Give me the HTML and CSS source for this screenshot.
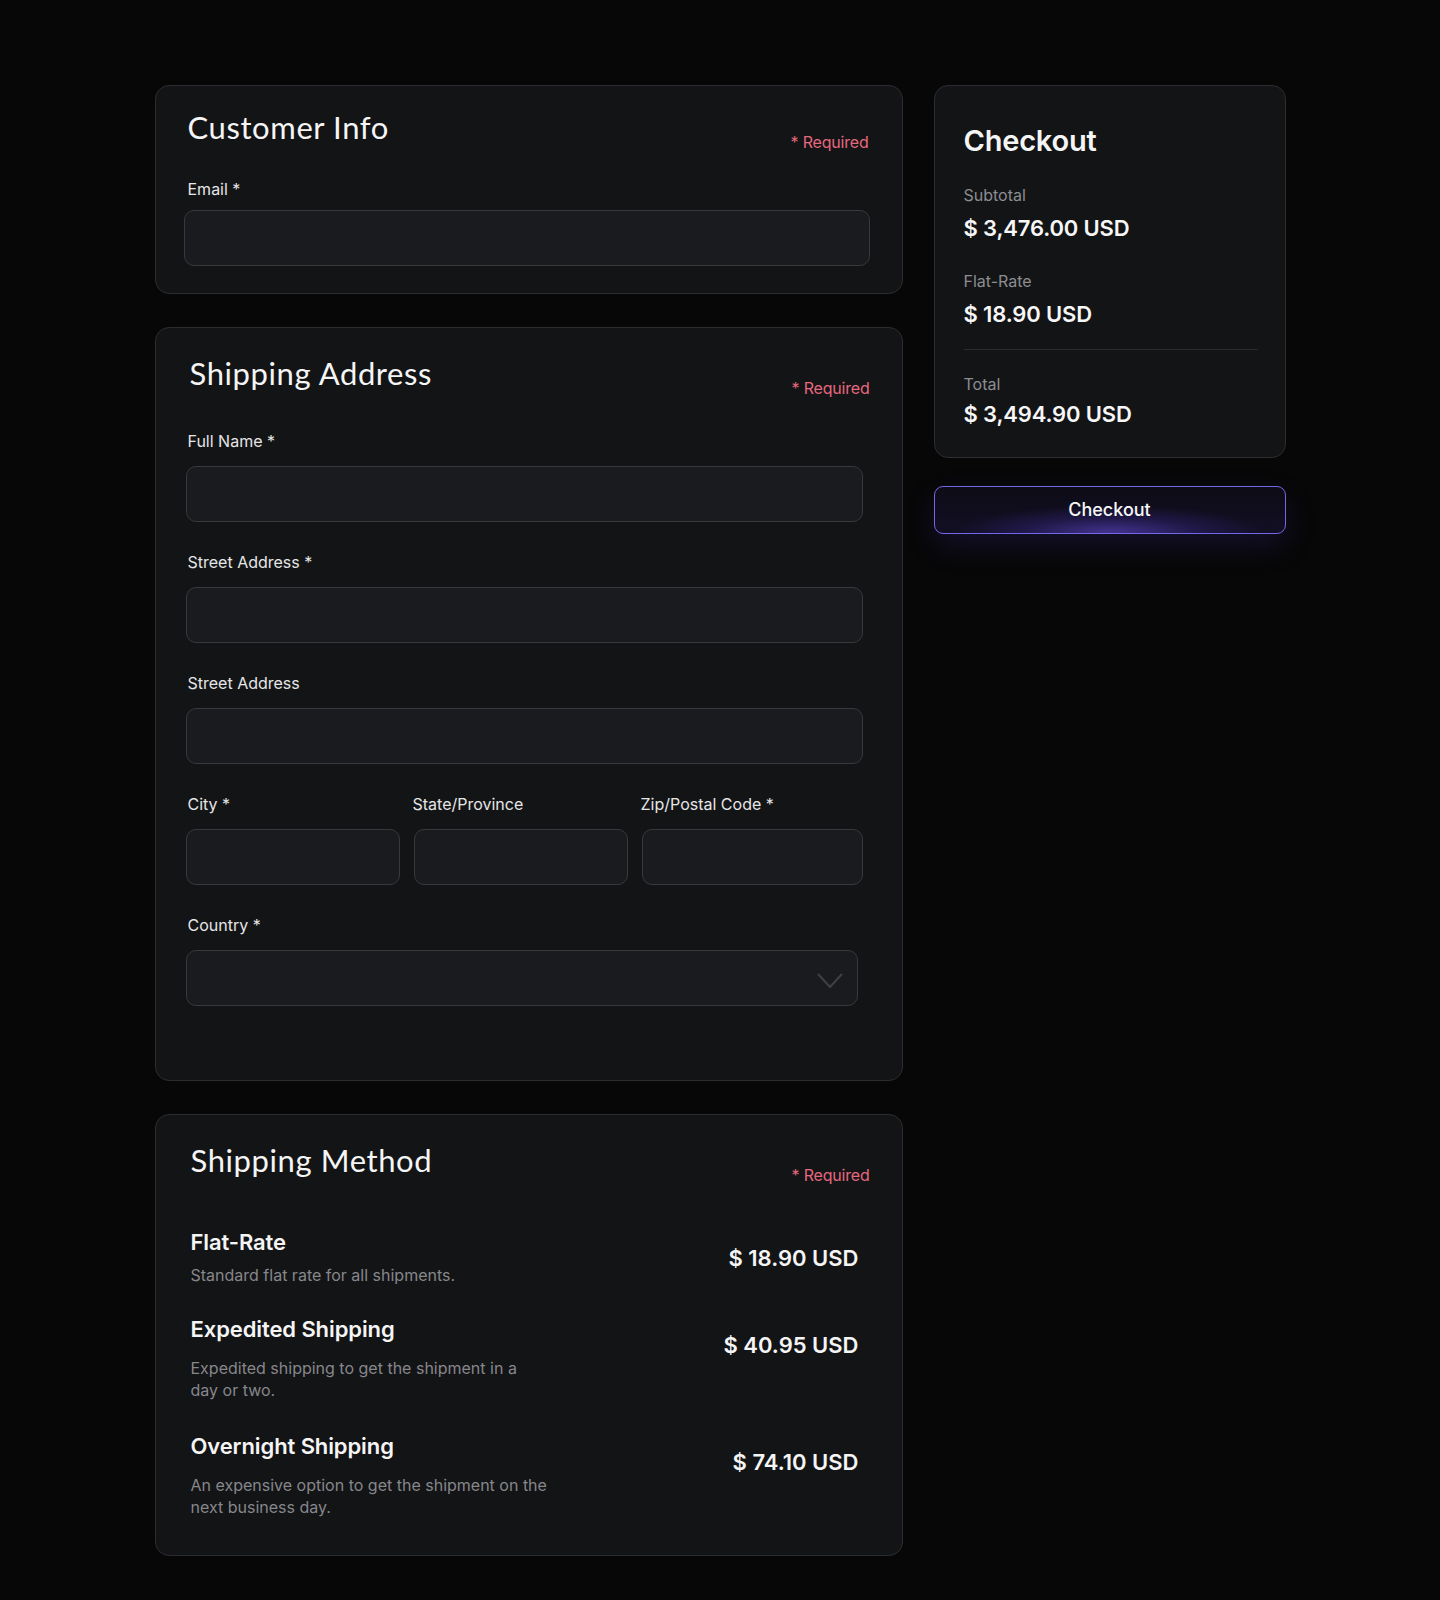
FILE: index.html
```html
<!DOCTYPE html>
<html lang="en">
<head>
<meta charset="utf-8">
<title>Checkout</title>
<link rel="stylesheet" href="styles.css">
</head>
<body>
<div class="page">
  <main class="main">
    <section class="card card-customer">
      <div class="card-head">
        <h2 class="card-title">Customer Info</h2>
        <span class="required">* Required</span>
      </div>
      <div class="field">
        <label class="label" for="email">Email *</label>
        <input class="input" id="email" type="email">
      </div>
    </section>

    <section class="card card-address">
      <div class="card-head">
        <h2 class="card-title">Shipping Address</h2>
        <span class="required">* Required</span>
      </div>
      <div class="fields">
        <div class="field">
          <label class="label" for="name">Full Name *</label>
          <input class="input" id="name" type="text">
        </div>
        <div class="field">
          <label class="label" for="street1">Street Address *</label>
          <input class="input" id="street1" type="text">
        </div>
        <div class="field">
          <label class="label" for="street2">Street Address</label>
          <input class="input" id="street2" type="text">
        </div>
        <div class="field-row">
          <div class="field">
            <label class="label" for="city">City *</label>
            <input class="input" id="city" type="text">
          </div>
          <div class="field">
            <label class="label" for="state">State/Province</label>
            <input class="input" id="state" type="text">
          </div>
          <div class="field">
            <label class="label" for="zip">Zip/Postal Code *</label>
            <input class="input" id="zip" type="text">
          </div>
        </div>
        <div class="field">
          <label class="label" for="country">Country *</label>
          <div class="select-wrap">
            <select class="input select" id="country">
              <option value=""></option>
            </select>
            <svg class="chevron" width="26" height="16" viewBox="0 0 26 16" aria-hidden="true">
              <polyline points="1.5,1.5 13,14 24.5,1.5" fill="none" stroke="#3f4044" stroke-width="2" stroke-linecap="round" stroke-linejoin="round"/>
            </svg>
          </div>
        </div>
      </div>
    </section>

    <section class="card card-method">
      <div class="card-head">
        <h2 class="card-title">Shipping Method</h2>
        <span class="required">* Required</span>
      </div>
      <div class="methods">
        <div class="method">
          <div class="method-info">
            <div class="method-name">Flat-Rate</div>
            <p class="method-desc method-desc-short">Standard flat rate for all shipments.</p>
          </div>
          <div class="method-price">$ 18.90 USD</div>
        </div>
        <div class="method">
          <div class="method-info">
            <div class="method-name">Expedited Shipping</div>
            <p class="method-desc">Expedited shipping to get the shipment in a day or two.</p>
          </div>
          <div class="method-price">$ 40.95 USD</div>
        </div>
        <div class="method">
          <div class="method-info">
            <div class="method-name">Overnight Shipping</div>
            <p class="method-desc">An expensive option to get the shipment on the next business day.</p>
          </div>
          <div class="method-price">$ 74.10 USD</div>
        </div>
      </div>
    </section>
  </main>

  <aside class="aside">
    <section class="card summary">
      <h2 class="summary-title">Checkout</h2>
      <div class="summary-row">
        <span class="summary-label">Subtotal</span>
        <span class="summary-value">$ 3,476.00 USD</span>
      </div>
      <div class="summary-row summary-row-ship">
        <span class="summary-label">Flat-Rate</span>
        <span class="summary-value">$ 18.90 USD</span>
      </div>
      <hr class="divider">
      <div class="summary-row summary-row-total">
        <span class="summary-label">Total</span>
        <span class="summary-value">$ 3,494.90 USD</span>
      </div>
    </section>
    <button class="checkout-btn" type="button">Checkout</button>
  </aside>
</div>
</body>
</html>
```

FILE: styles.css
```css
* {
  box-sizing: border-box;
}

html, body {
  margin: 0;
  padding: 0;
  background: #070707;
}

body {
  font-family: Inter, "Noto Sans", Arial, sans-serif;
  color: #f2f2f2;
  min-height: 1600px;
}

.page {
  display: flex;
  justify-content: center;
  align-items: flex-start;
  gap: 31px;
  padding: 85px 0 45px;
}

.main {
  width: 748px;
  display: flex;
  flex-direction: column;
  gap: 33px;
}

.aside {
  width: 352px;
  display: flex;
  flex-direction: column;
  gap: 28px;
}

.card {
  background: #131416;
  border: 1px solid #2c2d30;
  border-radius: 14px;
}

.card-head {
  display: flex;
  justify-content: space-between;
  align-items: flex-start;
}

.card-title {
  margin: 0;
  font-family: Lato, "Open Sans", sans-serif;
  font-weight: 400;
  font-size: 31px;
  line-height: 40px;
  letter-spacing: 0.6px;
  color: #f5f5f5;
}

.required {
  margin-top: 25px;
  font-size: 16px;
  line-height: 20px;
  color: #e5687f;
  letter-spacing: -0.2px;
}

.field {
  display: flex;
  flex-direction: column;
  gap: 15px;
}

.label {
  font-size: 16px;
  line-height: 20px;
  color: #e6e6e6;
  margin-left: 2px;
}

.input {
  display: block;
  width: 100%;
  height: 56px;
  margin: 0;
  padding: 0 16px;
  background: #1a1b1e;
  border: 1px solid #38393c;
  border-radius: 10px;
  color: #f2f2f2;
  font-family: Inter, sans-serif;
  font-size: 16px;
  outline: none;
}

/* Customer info */
.card-customer {
  padding: 21px 32px 27px 28px;
}

.card-customer .card-title {
  margin-left: 4px;
}

.card-customer .required {
  margin-right: 1px;
}

.card-customer .card-head {
  margin-bottom: 27px;
}

.card-customer .field {
  gap: 11px;
}

.card-customer .label {
  margin-left: 4px;
}

/* Shipping address */
.card-address {
  padding: 25px 32px 74px 30px;
}

.card-address .card-title {
  margin-left: 4px;
}

.card-address .card-head {
  margin-bottom: 33px;
}

.fields {
  display: flex;
  flex-direction: column;
  gap: 30px;
  margin-right: 7px;
}

.field-row {
  display: grid;
  grid-template-columns: 214px 214px 1fr;
  gap: 14px;
}

.field-row .label {
  margin-left: -1px;
}

.field-row .field:first-child .label {
  margin-left: 2px;
}

.select-wrap {
  position: relative;
  margin-right: 5px;
}

.select {
  appearance: none;
  -webkit-appearance: none;
  cursor: pointer;
}

.chevron {
  position: absolute;
  right: 15px;
  top: 23px;
  pointer-events: none;
}

/* Shipping method */
.card-method {
  padding: 25px 32px 37px 35px;
}

.card-method .card-head {
  margin-bottom: 43px;
}

.methods {
  display: flex;
  flex-direction: column;
  gap: 29px;
  margin-right: 11px;
}

.method {
  display: flex;
  justify-content: space-between;
  align-items: flex-start;
}

.method + .method + .method {
  margin-top: 2px;
}

.method-info {
  max-width: 357px;
}

.method-name {
  font-size: 22px;
  line-height: 28px;
  font-weight: 600;
  color: #f5f5f5;
  letter-spacing: -0.1px;
}

.method-desc {
  margin: 14px 0 0;
  font-size: 16px;
  line-height: 22px;
  color: #86878b;
}

.method-desc-short {
  margin-top: 8px;
}

.method-price {
  margin-top: 16px;
  font-size: 22px;
  line-height: 28px;
  font-weight: 600;
  color: #f5f5f5;
  white-space: nowrap;
}

/* Summary */
.summary {
  padding: 37px 27px 29px 29px;
}

.summary-title {
  margin: 0 0 26px;
  font-size: 29px;
  line-height: 36px;
  font-weight: 600;
  color: #f5f5f5;
  letter-spacing: -0.2px;
}

.summary-row {
  display: flex;
  flex-direction: column;
  gap: 9px;
}

.summary-row-ship {
  margin-top: 29px;
}

.summary-row-total {
  gap: 6px;
}

.summary-label {
  font-size: 16px;
  line-height: 20px;
  color: #8c8d91;
}

.summary-value {
  font-size: 22px;
  line-height: 28px;
  font-weight: 600;
  color: #f7f7f7;
  letter-spacing: -0.15px;
}

.divider {
  margin: 21px 0 24px;
  height: 1px;
  border: 0;
  background: #2a2b2e;
}

.checkout-btn {
  display: flex;
  align-items: center;
  justify-content: center;
  width: 100%;
  height: 48px;
  margin: 0;
  padding: 0 0 2px;
  border: 1px solid #7467ea;
  border-radius: 9px;
  background:
    radial-gradient(ellipse 55% 75% at 50% 100%, rgba(98, 72, 210, 0.62) 0%, rgba(70, 50, 170, 0.28) 45%, rgba(20, 16, 40, 0) 80%),
    linear-gradient(180deg, #0d0c16 0%, #120f24 100%);
  box-shadow: 0 12px 30px rgba(80, 60, 200, 0.18);
  color: #f7f7f7;
  font-family: Inter, sans-serif;
  font-size: 18px;
  font-weight: 500;
  cursor: pointer;
}
```
